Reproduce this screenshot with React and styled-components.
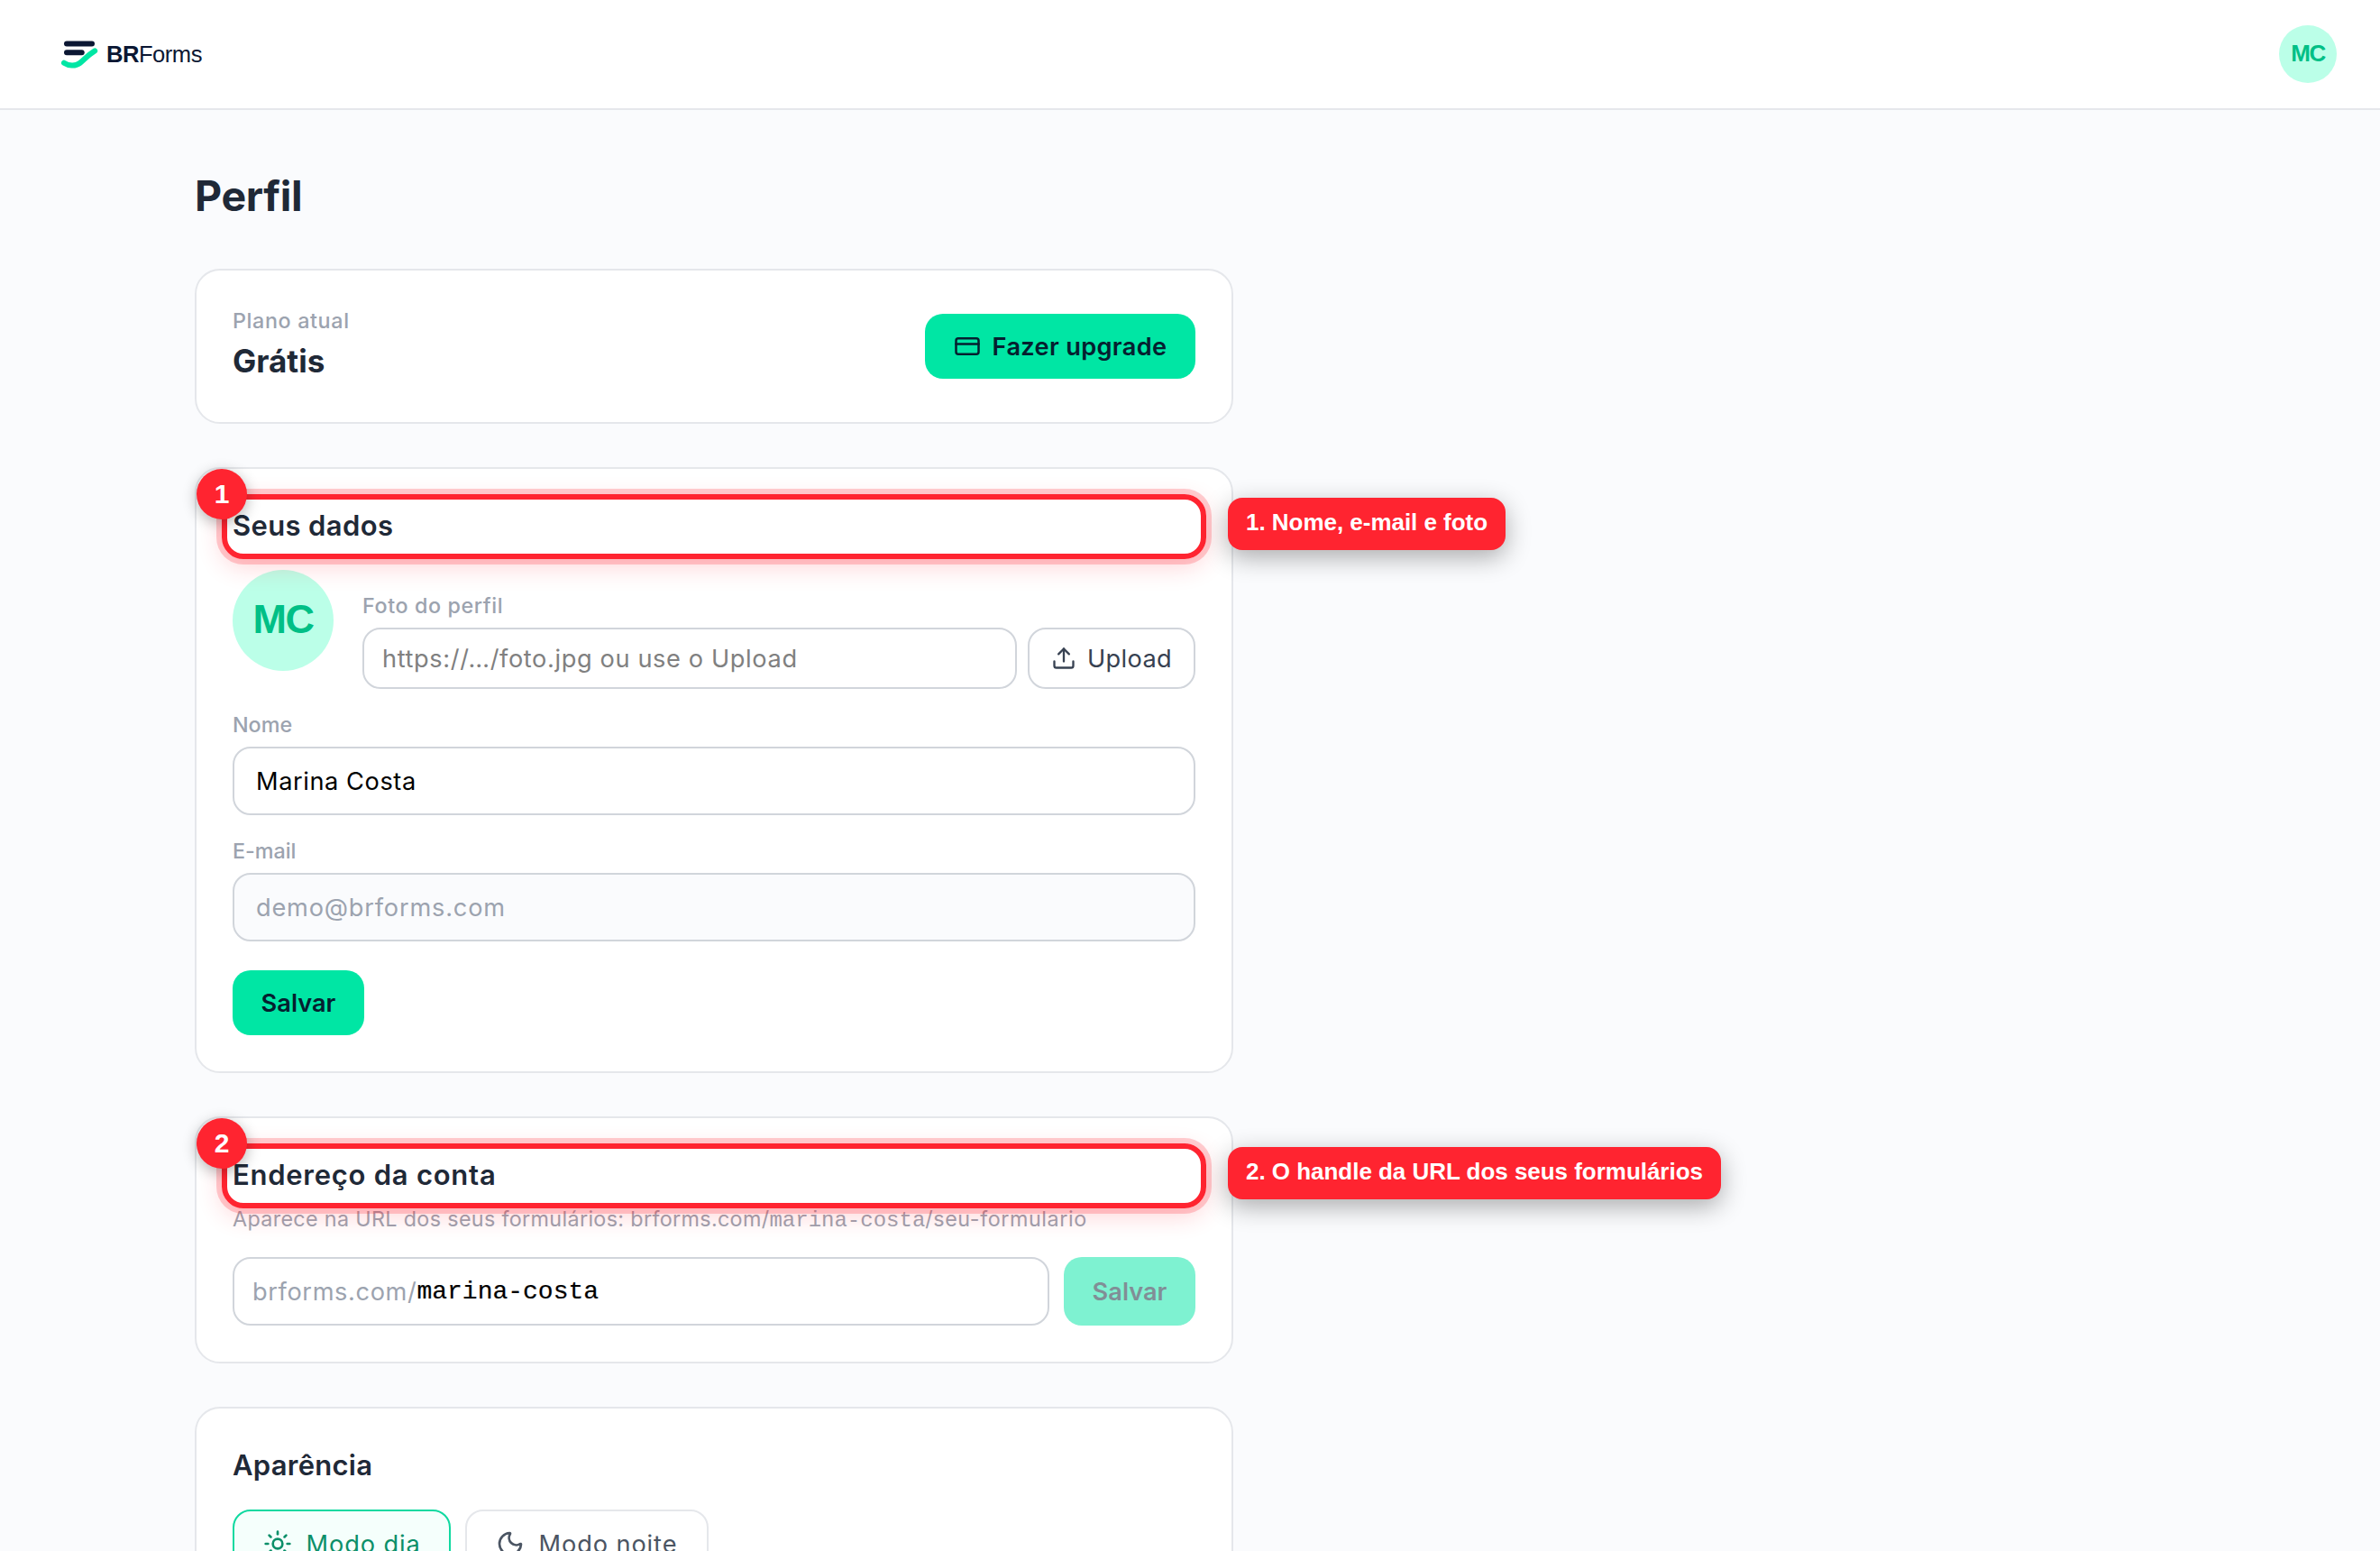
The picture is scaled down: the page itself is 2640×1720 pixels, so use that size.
import styled, { createGlobalStyle, css } from 'styled-components';
import { CreditCard, Upload, Sun, Moon } from 'lucide-react';

const GlobalStyle = createGlobalStyle`
    *, *::before, *::after {
        box-sizing: border-box;
    }

    body {
        margin: 0;
        height: 1720px;
        overflow: hidden;
        background: #fafbfd;
        color: #1f2937;
        font-family: 'Inter', sans-serif;
    }

    h1, h2, p {
        margin: 0;
    }

    button, input {
        font-family: inherit;
    }
`;

const Header = styled.header`
    display: flex;
    align-items: center;
    justify-content: space-between;
    height: 122px;
    padding: 0 48px 0 68px;
    background: #ffffff;
    border-bottom: 2px solid #e5e7eb;
`;

const Brand = styled.div`
    display: flex;
    align-items: center;
    gap: 8px;
    color: #0b1733;
    font-family: 'Liberation Sans', Arial, sans-serif;
    font-size: 25.6px;
    letter-spacing: -0.5px;
    white-space: nowrap;
`;

const Avatar = styled.div`
    display: flex;
    align-items: center;
    justify-content: center;
    flex: none;
    width: ${(props) => (props.$large ? 112 : 64)}px;
    height: ${(props) => (props.$large ? 112 : 64)}px;
    padding-bottom: ${(props) => (props.$large ? 3 : 1)}px;
    border-radius: 50%;
    background: #bbffe8;
    color: #00bf86;
    font-family: 'Liberation Sans', Arial, sans-serif;
    font-size: ${(props) => (props.$large ? 45 : 26)}px;
    font-weight: 700;
    letter-spacing: -1.4px;
`;

const Main = styled.main`
    width: 1152px;
    margin: 63px 0 0 216px;
`;

const Title = styled.h1`
    font-size: 46.5px;
    font-weight: 700;
    line-height: 64px;
    letter-spacing: -0.34px;
    margin-bottom: 49px;
`;

const Card = styled.section`
    padding: 40px;
    margin-bottom: 48px;
    background: #ffffff;
    border: 2px solid #e5e7eb;
    border-radius: 28px;
`;

const PlanRow = styled.div`
    display: flex;
    align-items: center;
    justify-content: space-between;
`;

const Label = styled.p`
    margin-bottom: ${(props) => (props.$flush ? 0 : 8)}px;
    color: #9ca3af;
    font-size: 23.3px;
    font-weight: 500;
    line-height: 32px;
    letter-spacing: ${(props) => props.$track || 0}px;
`;

const PlanName = styled.p`
    font-size: 35px;
    font-weight: 700;
    line-height: 56px;
`;

const Button = styled.button`
    display: flex;
    align-items: center;
    justify-content: center;
    gap: 13px;
    width: ${(props) => props.$width}px;
    height: ${(props) => props.$height || 72}px;
    padding: 0;
    border: none;
    border-radius: 20px;
    background: #00e6a4;
    color: #05202f;
    font-size: 27.2px;
    font-weight: 600;
    letter-spacing: ${(props) => props.$track || 0}px;
    white-space: nowrap;

    &:disabled {
        opacity: 0.5;
    }
`;

const HeadingWrap = styled.div`
    position: relative;
    margin-bottom: ${(props) => props.$gap}px;
`;

const Heading = styled.h2`
    padding-bottom: 2px;
    font-size: 31px;
    font-weight: 600;
    line-height: 46px;
    letter-spacing: ${(props) => props.$track}px;
`;

// the callouts sit on top of the form, so they never push it around
const Outline = styled.div`
    position: absolute;
    inset: -12px;
    z-index: 1;
    border: 6px solid #ff2430;
    border-radius: 24px;
    box-shadow: 0 0 0 6px rgba(255, 36, 48, 0.22),
        0 8px 28px rgba(255, 36, 48, 0.2);
`;

const Badge = styled.span`
    position: absolute;
    top: -40px;
    left: -40px;
    z-index: 2;
    display: flex;
    align-items: center;
    justify-content: center;
    width: 56px;
    height: 56px;
    border-radius: 50%;
    background: #ff2430;
    color: #ffffff;
    box-shadow: 0 4px 16px rgba(0, 0, 0, 0.3);
    font-family: 'Liberation Sans', Arial, sans-serif;
    font-size: 30px;
    font-weight: 700;
`;

const Tag = styled.span`
    position: absolute;
    top: -8px;
    left: calc(100% + 36px);
    z-index: 2;
    height: 58px;
    padding: 0 20px;
    border-radius: 16px;
    background: #ff2430;
    color: #ffffff;
    box-shadow: 0 8px 28px rgba(0, 0, 0, 0.32);
    font-family: 'Liberation Sans', Arial, sans-serif;
    font-size: 26px;
    font-weight: 700;
    line-height: 55px;
    letter-spacing: -0.03px;
    white-space: nowrap;
`;

const PhotoRow = styled.div`
    display: flex;
    gap: 32px;
    margin-bottom: 24px;
`;

const PhotoField = styled.div`
    flex: 1;
    padding-top: 24px;
`;

const Inline = styled.div`
    display: flex;
    gap: ${(props) => props.$gap}px;
`;

const box = css`
    border: 2px solid #d1d5db;
    border-radius: 20px;
    background: #ffffff;
    font-size: 27.2px;
`;

const Input = styled.input`
    ${box}
    display: block;
    width: 100%;
    height: ${(props) => (props.$compact ? 68 : 76)}px;
    margin: 0 0 ${(props) => props.$gap || 0}px;
    padding: 0 ${(props) => (props.$compact ? 20 : 24)}px;
    color: #000000;
    letter-spacing: ${(props) => props.$track}px;

    &::placeholder {
        color: #808080;
    }

    &:disabled {
        background: #fafbfd;
        color: #9ca3af;
    }
`;

const UploadButton = styled.button`
    ${box}
    display: flex;
    align-items: center;
    flex: none;
    gap: 12px;
    width: 186px;
    height: 68px;
    padding: 0 0 0 24px;
    color: #374151;
    letter-spacing: 0.35px;
`;

const Hint = styled.p`
    color: #9ca3af;
    font-size: 23.3px;
    line-height: 32px;
    letter-spacing: 0.35px;
    margin-bottom: 24px;
    white-space: nowrap;

    code {
        font-family: 'Liberation Mono', monospace;
        font-size: 24px;
        letter-spacing: 0;
    }

    span {
        letter-spacing: 0.6px;
    }
`;

const Handle = styled.div`
    ${box}
    display: flex;
    align-items: center;
    flex: 1;
    height: 76px;
    padding: 0 20px;
    color: #9ca3af;
    letter-spacing: 0.62px;

    input {
        flex: 1;
        padding: 0;
        border: none;
        background: none;
        color: #000000;
        font-family: 'Liberation Mono', monospace;
        font-size: 28px;
        -webkit-text-stroke: 0.2px #000000;
        letter-spacing: 0;
    }
`;

const ModeButton = styled.button`
    display: flex;
    align-items: center;
    gap: 15.5px;
    width: ${(props) => props.$width}px;
    height: 76px;
    padding: 0 0 0 32px;
    border: 2px solid ${(props) => (props.$active ? '#10d9a0' : '#e5e7eb')};
    border-radius: 20px;
    background: ${(props) => (props.$active ? '#f5fffc' : '#ffffff')};
    color: ${(props) => (props.$active ? '#0b8f69' : '#4b5563')};
    font-size: 27.2px;
    letter-spacing: 0.9px;
    white-space: nowrap;
`;

const Logo = () => (
    <svg width='42' height='34' viewBox='0 0 42 34' fill='none' strokeLinecap='round'>
        <path d='M6 5.5H34' stroke='#0b1733' strokeWidth='6' />
        <path d='M6 15.2H22.7' stroke='#0b1733' strokeWidth='6' />
        <path
            d='M3 26.7C8 30 15.5 30.8 20.5 27C25.5 23.2 29 18.4 37.2 13.4'
            stroke='#00e6a4'
            strokeWidth='6'
        />
    </svg>
);

const Callout = ({ number, text }) => (
    <>
        <Outline />
        <Badge>{number}</Badge>
        <Tag>
            {number}. {text}
        </Tag>
    </>
);

const App = () => {
    return (
        <>
            <GlobalStyle />
            <Header>
                <Brand>
                    <Logo />
                    <span>
                        <b>BR</b>Forms
                    </span>
                </Brand>
                <Avatar>MC</Avatar>
            </Header>

            <Main>
                <Title>Perfil</Title>

                <Card>
                    <PlanRow>
                        <div>
                            <Label $flush $track={0.64}>
                                Plano atual
                            </Label>
                            <PlanName>Grátis</PlanName>
                        </div>
                        <Button $width={300} $track={0.33}>
                            <CreditCard size={30} strokeWidth={2} />
                            Fazer upgrade
                        </Button>
                    </PlanRow>
                </Card>

                <Card>
                    <HeadingWrap $gap={24}>
                        <Heading $track={0.36}>Seus dados</Heading>
                        <Callout number={1} text='Nome, e-mail e foto' />
                    </HeadingWrap>
                    <PhotoRow>
                        <Avatar $large>MC</Avatar>
                        <PhotoField>
                            <Label $track={0.6}>Foto do perfil</Label>
                            <Inline $gap={12}>
                                <Input
                                    $compact
                                    $track={0.62}
                                    placeholder='https://…/foto.jpg ou use o Upload'
                                />
                                <UploadButton>
                                    <Upload size={28} strokeWidth={2} />
                                    Upload
                                </UploadButton>
                            </Inline>
                        </PhotoField>
                    </PhotoRow>
                    <Label>Nome</Label>
                    <Input $gap={24} $track={0.58} defaultValue='Marina Costa' />
                    <Label>E-mail</Label>
                    <Input $gap={32} $track={0.8} defaultValue='demo@brforms.com' disabled />
                    <Button $width={146}>Salvar</Button>
                </Card>

                <Card>
                    <HeadingWrap $gap={8}>
                        <Heading $track={0.74}>Endereço da conta</Heading>
                        <Callout number={2} text='O handle da URL dos seus formulários' />
                    </HeadingWrap>
                    <Hint>
                        Aparece na URL dos seus formulários: brforms.com/
                        <code>marina-costa</code>
                        <span>/seu-formulario</span>
                    </Hint>
                    <Inline $gap={16}>
                        <Handle>
                            brforms.com/
                            <input defaultValue='marina-costa' />
                        </Handle>
                        <Button $width={146} $height={76} disabled>
                            Salvar
                        </Button>
                    </Inline>
                </Card>

                <Card>
                    <HeadingWrap $gap={24}>
                        <Heading $track={0.26}>Aparência</Heading>
                    </HeadingWrap>
                    <Inline $gap={16}>
                        <ModeButton $active $width={242}>
                            <Sun size={32} strokeWidth={2} />
                            Modo dia
                        </ModeButton>
                        <ModeButton $width={270}>
                            <Moon size={32} strokeWidth={2} />
                            Modo noite
                        </ModeButton>
                    </Inline>
                </Card>
            </Main>
        </>
    );
};

export default App;
